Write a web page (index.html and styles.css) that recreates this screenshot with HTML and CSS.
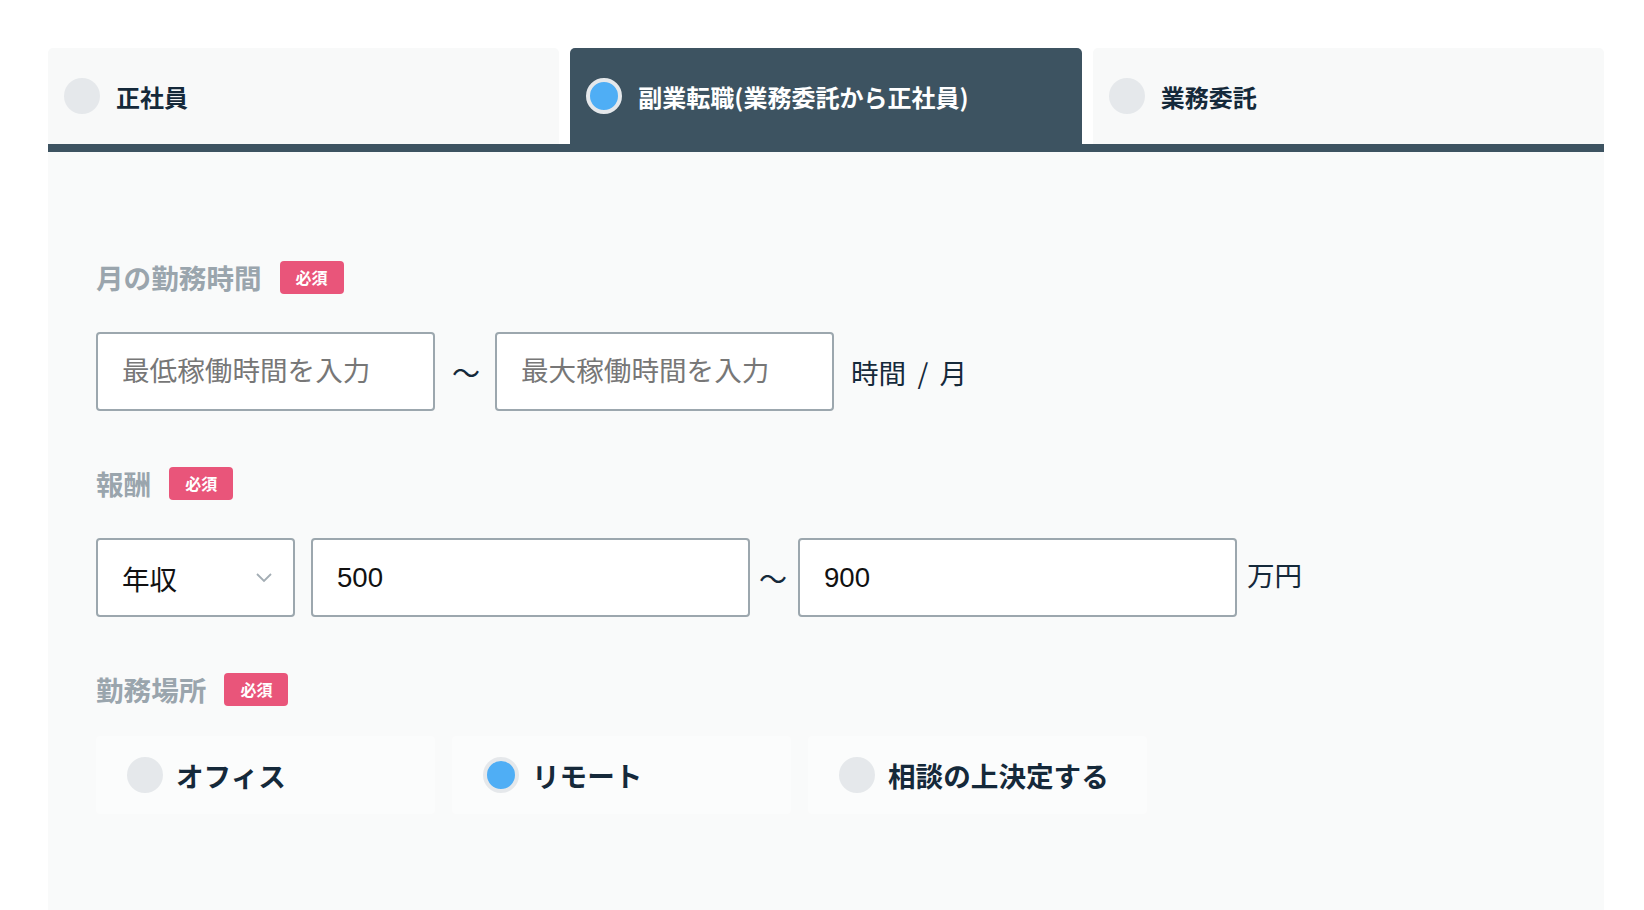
FILE: index.html
```html
<!DOCTYPE html>
<html lang="ja">
<head>
<meta charset="utf-8">
<link rel="stylesheet" href="styles.css">
</head>
<body>
<div class="wrap">
  <div class="tabs">
    <div class="tab">
      <span class="radio"></span><span class="tab-label">正社員</span>
    </div>
    <div class="tab tab-active">
      <span class="radio radio-on"></span><span class="tab-label">副業転職(業務委託から正社員)</span>
    </div>
    <div class="tab">
      <span class="radio"></span><span class="tab-label">業務委託</span>
    </div>
  </div>
  <div class="panel">
    <div class="field-head">
      <span class="field-label">月の勤務時間</span><span class="badge">必須</span>
    </div>
    <div class="row row-hours">
      <input class="input input-hours" type="text" placeholder="最低稼働時間を入力">
      <span class="tilde tilde-wide">〜</span>
      <input class="input input-hours" type="text" placeholder="最大稼働時間を入力">
      <span class="unit unit-hours">時間 / 月</span>
    </div>

    <div class="field-head">
      <span class="field-label">報酬</span><span class="badge">必須</span>
    </div>
    <div class="row row-pay">
      <div class="select">
        <span>年収</span>
        <svg class="chev" width="18" height="12" viewBox="0 0 18 12"><path d="M2 2 L9 9 L16 2" fill="none" stroke="#a3adb4" stroke-width="1.8"/></svg>
      </div>
      <input class="input input-pay" type="text" value="500">
      <span class="tilde tilde-narrow">〜</span>
      <input class="input input-pay" type="text" value="900">
      <span class="unit unit-pay">万円</span>
    </div>

    <div class="field-head">
      <span class="field-label">勤務場所</span><span class="badge">必須</span>
    </div>
    <div class="options">
      <div class="option"><span class="radio"></span><span class="opt-label">オフィス</span></div>
      <div class="option"><span class="radio radio-on"></span><span class="opt-label">リモート</span></div>
      <div class="option"><span class="radio"></span><span class="opt-label">相談の上決定する</span></div>
    </div>
  </div>
</div>
</body>
</html>
```

FILE: styles.css
```css
html, body {
  margin: 0;
  padding: 0;
  background: #ffffff;
  font-family: "Noto Sans CJK JP", "Noto Sans", sans-serif;
  color: #15293a;
}

.wrap {
  margin: 48px 40px 0 48px;
}

.tabs {
  display: flex;
  gap: 11px;
  border-bottom: 8px solid #3d5361;
}

.tab {
  flex: 1 1 0;
  height: 96px;
  display: flex;
  align-items: center;
  padding-left: 16px;
  background: #f8f9f9;
  border-radius: 5px 5px 0 0;
}

.tab-active {
  background: #3d5361;
}

.tab-label {
  font-size: 24px;
  font-weight: 700;
  margin-left: 16px;
  color: #15293a;
}

.tab-active .tab-label {
  color: #ffffff;
}

.radio {
  width: 36px;
  height: 36px;
  border-radius: 50%;
  background: #e5e8eb;
  flex: 0 0 auto;
  box-sizing: border-box;
}

.radio-on {
  background: #4faef5;
  border: 4px solid #e5e8eb;
}

.panel {
  background: #f9fafa;
  padding: 108px 48px 0 48px;
  height: 758px;
  box-sizing: border-box;
}

.field-head {
  display: flex;
  align-items: center;
  height: 34px;
}

.field-label {
  font-size: 27.6px;
  font-weight: 700;
  color: #9aa5ad;
  margin-right: 18px;
}

.badge {
  display: inline-flex;
  align-items: center;
  justify-content: center;
  width: 64px;
  height: 33px;
  border-radius: 4px;
  background: #e9557a;
  color: #ffffff;
  font-size: 16px;
  font-weight: 700;
}

.row {
  display: flex;
  align-items: center;
  margin-top: 38px;
  margin-bottom: 55px;
}

.input {
  height: 79px;
  box-sizing: border-box;
  border: 2px solid #9ca7ae;
  border-radius: 4px;
  background: #ffffff;
  padding: 0 0 0 24px;
  font-size: 27.6px;
  font-family: "Liberation Sans", "Noto Sans CJK JP", sans-serif;
  color: #111111;
  outline: none;
  margin: 0;
}

.input::placeholder {
  color: #777777;
  font-family: "Noto Sans CJK JP", sans-serif;
}

.input-hours {
  width: 339px;
}

.input-pay {
  width: 439px;
}

.tilde {
  font-size: 28px;
  color: #15293a;
}

.tilde-wide {
  margin: 0 15px 0 17px;
}

.tilde-narrow {
  margin: 0 11px 0 9px;
}

.unit {
  font-size: 27.6px;
  color: #15293a;
}

.unit-hours {
  margin-left: 17px;
  word-spacing: 5px;
}

.unit-pay {
  margin-left: 10px;
  margin-top: -7px;
}

.select {
  width: 199px;
  height: 79px;
  box-sizing: border-box;
  border: 2px solid #9ca7ae;
  border-radius: 4px;
  background: #ffffff;
  display: flex;
  align-items: center;
  justify-content: space-between;
  padding: 0 20px 0 24px;
  font-size: 27.6px;
  color: #111111;
  margin-right: 16px;
}

.chev {
  display: block;
}

.options {
  display: flex;
  gap: 17px;
  margin-top: 30px;
}

.option {
  width: 339px;
  height: 78px;
  display: flex;
  align-items: center;
  padding-left: 31px;
  box-sizing: border-box;
  background: #fbfcfc;
  border-radius: 4px;
}

.opt-label {
  font-size: 27.6px;
  font-weight: 700;
  margin-left: 13px;
  color: #15293a;
}
```
